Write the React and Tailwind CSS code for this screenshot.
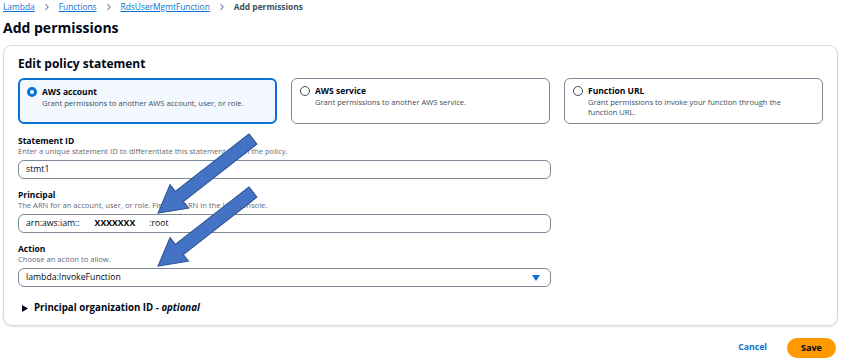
import { ChevronRight } from 'lucide-react';

const font = { fontFamily: '"Open Sans", "Noto Sans", sans-serif' };

function Tile({ title, desc, selected }) {
  return (
    <div
      className={
        'flex-1 h-[46px] rounded-[6px] pt-[6px] flex gap-[5px] ' +
        (selected ? 'px-[7px] border-2 border-[#0972d3] bg-[#f2f8fd]' : 'px-[8px] border-[1.5px] border-[#7d8998] bg-white')
      }
    >
      <div
        className={
          'mt-[1px] w-[10px] h-[10px] rounded-full shrink-0 ' +
          (selected ? 'border-[3px] border-[#0972d3] bg-white' : 'border border-[#414d5c] bg-white')
        }
      />
      <div>
        <div className="text-[8.5px] font-bold text-[#000716] leading-[12px]">{title}</div>
        <div className="text-[7.6px] text-[#414d5c] leading-[10px]">{desc}</div>
      </div>
    </div>
  );
}

function Field({ label, desc, children }) {
  return (
    <div className="w-[533px]">
      <div className="text-[8.5px] font-bold text-[#000716] leading-[11px]">{label}</div>
      <div className="text-[7.6px] text-[#5f6b7a] leading-[10px]">{desc}</div>
      <div className="mt-[4px] h-[19px] rounded-[6px] border-[1.5px] border-[#7d8998] flex items-center px-[7px] text-[8.7px] text-[#000716]">
        {children}
      </div>
    </div>
  );
}

function Arrow({ x, y, dx, dy }) {
  const len = Math.sqrt(dx * dx + dy * dy);
  const ang = (Math.atan2(dy, dx) * 180) / Math.PI;
  const h = len - 27;
  return (
    <polygon
      transform={`translate(${x} ${y}) rotate(${ang})`}
      points={`0,-6.5 ${h},-6.5 ${h},-15 ${len},0 ${h},15 ${h},6.5 0,6.5`}
      fill="#4472c4"
      stroke="#2f528f"
      strokeWidth="1"
    />
  );
}

export default function App() {
  return (
    <div className="relative w-[843px] h-[362px] bg-white overflow-hidden" style={font}>
      <div className="px-[3px] pt-[1px]">
        <div className="flex items-center gap-[7px] text-[8.4px] h-[12px]">
          <span className="text-[#0972d3] underline">Lambda</span>
          <ChevronRight size={10} strokeWidth={2.5} className="text-[#5f6b7a]" />
          <span className="text-[#0972d3] underline">Functions</span>
          <ChevronRight size={10} strokeWidth={2.5} className="text-[#5f6b7a]" />
          <span className="text-[#0972d3] underline">RdsUserMgmtFunction</span>
          <ChevronRight size={10} strokeWidth={2.5} className="text-[#5f6b7a]" />
          <span className="text-[#414d5c] font-bold">Add permissions</span>
        </div>
        <div className="mt-[4px] text-[14px] font-bold text-[#000716] leading-[22px]">Add permissions</div>

        <div className="mt-[6px] w-[835px] h-[281px] rounded-[9px] border border-[#d5dbdb] shadow-[0_1px_2px_rgba(0,0,0,0.12)] px-[14px] pt-[9px]">
          <div className="text-[12px] font-bold text-[#000716] leading-[17px]">Edit policy statement</div>
          <div className="mt-[6px] flex gap-[14px] w-[805px]">
            <Tile selected title="AWS account" desc="Grant permissions to another AWS account, user, or role." />
            <Tile title="AWS service" desc="Grant permissions to another AWS service." />
            <Tile title="Function URL" desc={<>Grant permissions to invoke your function through the<br />function URL.</>} />
          </div>

          <div className="mt-[11px] flex flex-col gap-[10px]">
            <Field label="Statement ID" desc="Enter a unique statement ID to differentiate this statement within the policy.">
              stmt1
            </Field>
            <Field label="Principal" desc="The ARN for an account, user, or role. Find the ARN in the IAM console.">
              <span>arn:aws:iam::</span>
              <span className="ml-[15px] font-bold text-black">XXXXXXX</span>
              <span className="ml-[14px]">:root</span>
            </Field>
            <Field label="Action" desc="Choose an action to allow.">
              <span className="flex-1">lambda:InvokeFunction</span>
              <svg width="8" height="6" viewBox="0 0 8 6" className="mr-[3px]">
                <path d="M0 0 L8 0 L4 6 Z" fill="#0972d3" />
              </svg>
            </Field>
          </div>

          <div className="mt-[14px] flex items-center gap-[6px] pl-[4px] text-[9.7px] font-bold text-[#000716]">
            <svg width="6" height="7" viewBox="0 0 6 7">
              <path d="M0 0 L6 3.5 L0 7 Z" fill="#000716" />
            </svg>
            <span>
              Principal organization ID - <i>optional</i>
            </span>
          </div>
        </div>

        <div className="mt-[12px] flex items-center justify-end gap-[20px] pr-[4px]">
          <span className="text-[8.7px] font-bold text-[#0972d3]">Cancel</span>
          <button className="w-[49px] h-[20px] rounded-full bg-[#ff9900] text-[9px] font-bold text-[#000716]">Save</button>
        </div>
      </div>

      <svg className="absolute left-0 top-0 pointer-events-none" width="843" height="362">
        <Arrow x={253} y={139} dx={-95} dy={74} />
        <Arrow x={253} y={192} dx={-95} dy={74} />
      </svg>
    </div>
  );
}
